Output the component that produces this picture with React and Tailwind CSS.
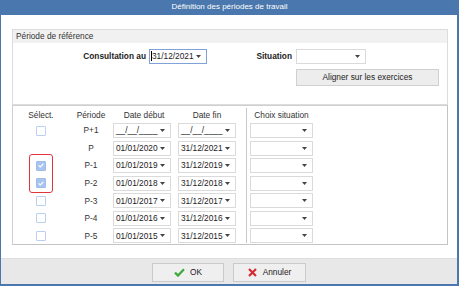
import React from "react";

const Arrow = () => (
  <svg width="5" height="3" viewBox="0 0 5 3" className="shrink-0">
    <path d="M0 0H5L2.5 3Z" fill="#444" />
  </svg>
);

function Combo({ value = "", w, focused = false, caret = false }) {
  return (
    <div
      className={`relative flex h-[15px] items-center justify-between bg-white pl-[2px] pr-[5px] ${w} border ${
        focused ? "border-[#7fa3d9]" : "border-[#dadada]"
      }`}
    >
      <span className="relative leading-none text-[#222]">
        {caret && <span className="absolute left-[-1px] top-[-1px] h-[10px] w-px bg-black" />}
        {value}
      </span>
      <Arrow />
    </div>
  );
}

function Check({ checked }) {
  if (checked)
    return (
      <div className="flex h-[10px] w-[10px] items-center justify-center rounded-[1px] border border-[#9ebdea] bg-[#a9c5ef]">
        <svg width="6" height="5" viewBox="0 0 6 5">
          <path d="M0.6 2.4L2.3 4L5.4 0.8" stroke="white" strokeWidth="1.2" fill="none" />
        </svg>
      </div>
    );
  return <div className="h-[10px] w-[10px] rounded-[1px] border border-[#b9d0f0] bg-white" />;
}

const rows = [
  { cb: true, sel: false, p: "P+1", d1: "__/__/____", d2: "__/__/____" },
  { cb: false, sel: false, p: "P", d1: "01/01/2020", d2: "31/12/2021" },
  { cb: true, sel: true, p: "P-1", d1: "01/01/2019", d2: "31/12/2019" },
  { cb: true, sel: true, p: "P-2", d1: "01/01/2018", d2: "31/12/2018" },
  { cb: true, sel: false, p: "P-3", d1: "01/01/2017", d2: "31/12/2017" },
  { cb: true, sel: false, p: "P-4", d1: "01/01/2016", d2: "31/12/2016" },
  { cb: true, sel: false, p: "P-5", d1: "01/01/2015", d2: "31/12/2015" },
];

export default function App() {
  return (
    <div className="flex h-[286px] w-[459px] flex-col bg-[#4a77ad] font-['Liberation_Sans',Arial,sans-serif] text-[8.3px] text-[#222]">
      <div className="flex h-[15px] shrink-0 items-center justify-center pb-[1px] text-[8px] text-white">
        Définition des périodes de travail
      </div>
      <div className="mb-[2px] ml-[1px] mr-[2px] flex flex-1 flex-col bg-white">
        {/* Group box 1 */}
        <div className="ml-[11px] mt-[14px] w-[436px] border border-[#dcdcdc]">
          <div className="flex h-[13px] items-center bg-[#f1f1f1] pl-[3px] text-[#333]">Période de référence</div>
          <div className="flex items-center pt-[6px]">
            <div className="w-[133px] text-right font-bold leading-none">Consultation au</div>
            <div className="ml-[3px]">
              <Combo value="31/12/2021" w="w-[58px]" focused caret />
            </div>
            <div className="w-[85px] text-right font-bold leading-none">Situation</div>
            <div className="ml-[4px]">
              <Combo value="" w="w-[70px]" />
            </div>
          </div>
          <div className="ml-[283px] mt-[5px] mb-[18px] flex h-[17px] w-[143px] items-center justify-center border border-[#d0d0d0] bg-[#ededed] leading-none text-[#222]">
            Aligner sur les exercices
          </div>
        </div>

        {/* Table box */}
        <div className="relative ml-[11px] w-[436px] border border-[#cfcfcf] border-b-[#c4c4c4] border-r-[#c4c4c4] pb-[1px]">
          <div className="flex">
            <div className="flex w-[233px] flex-col">
              <div className="flex h-[17px] items-end pb-[3px] leading-[10px] text-[#333]">
                <div className="w-[56px] text-center">Sélect.</div>
                <div className="w-[44px] text-center">Période</div>
                <div className="w-[62px] text-center">Date début</div>
                <div className="w-[64px] text-center">Date fin</div>
              </div>
              <div className="flex flex-col gap-[2.55px]">
                {rows.map((r) => (
                  <div key={r.p} className="flex h-[15px] items-center">
                    <div className="flex w-[56px] justify-center">{r.cb && <Check checked={r.sel} />}</div>
                    <div className="w-[44px] text-center leading-none text-[#333]">{r.p}</div>
                    <Combo value={r.d1} w="w-[58px]" />
                    <div className="w-[7px]" />
                    <Combo value={r.d2} w="w-[58px]" />
                  </div>
                ))}
              </div>
            </div>
            <div className="mt-[2px] w-px self-stretch bg-[#c9c9c9]" />
            <div className="flex flex-col pl-[3px]">
              <div className="flex h-[17px] w-[63px] items-end justify-center pb-[3px] leading-[10px] text-[#333]">
                Choix situation
              </div>
              <div className="flex flex-col gap-[2.55px]">
                {rows.map((r) => (
                  <Combo key={r.p} value="" w="w-[63px]" />
                ))}
              </div>
            </div>
          </div>
          <div className="absolute left-[16px] top-[48px] h-[39px] w-[24px] rounded-[3px] border border-[#e2343a]" />
        </div>

        {/* Footer */}
        <div className="mt-auto flex h-[26px] items-start justify-center gap-[9px] border-t border-[#dedede] bg-[#e8e8e8] pt-[4px]">
          <div className="flex h-[19px] w-[72px] items-center justify-center gap-[5px] border border-[#cacaca] bg-[#efefef]">
            <svg width="11" height="9" viewBox="0 0 11 9">
              <path d="M1 4.6L4 7.6L10 1.2" stroke="#3fa83f" strokeWidth="2.2" fill="none" />
            </svg>
            <span className="leading-none">OK</span>
          </div>
          <div className="flex h-[19px] w-[73px] items-center justify-center gap-[6px] border border-[#cacaca] bg-[#efefef]">
            <svg width="9" height="9" viewBox="0 0 9 9">
              <path d="M1 1L8 8M8 1L1 8" stroke="#d42a32" strokeWidth="2.2" fill="none" />
            </svg>
            <span className="leading-none">Annuler</span>
          </div>
        </div>
      </div>
    </div>
  );
}
